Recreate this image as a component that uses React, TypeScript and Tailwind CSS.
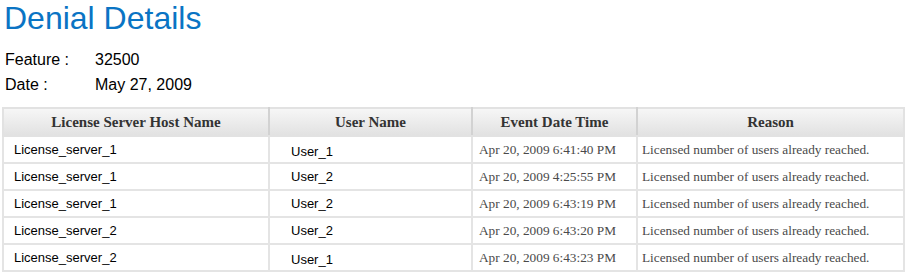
import React from "react"

const rows = [
  { host: "License_server_1", user: "User_1", time: "Apr 20, 2009 6:41:40 PM", low: true },
  { host: "License_server_1", user: "User_2", time: "Apr 20, 2009 4:25:55 PM", low: false },
  { host: "License_server_1", user: "User_2", time: "Apr 20, 2009 6:43:19 PM", low: false },
  { host: "License_server_2", user: "User_2", time: "Apr 20, 2009 6:43:20 PM", low: false },
  { host: "License_server_2", user: "User_1", time: "Apr 20, 2009 6:43:23 PM", low: true },
]

export default function App() {
  return (
    <div className="w-[913px] h-[280px] bg-white overflow-hidden font-['Liberation_Sans',Arial,sans-serif]">
      {/* Title */}
      <h1 className="pl-[4px] text-[32px] leading-[37px] text-[#0a74c4]">Denial Details</h1>

      {/* Summary */}
      <div className="mt-[10px] pl-[5px] text-[16px] leading-[25px] text-black">
        <div className="flex">
          <span className="w-[90px]">Feature :</span>
          <span>32500</span>
        </div>
        <div className="flex">
          <span className="w-[90px]">Date :</span>
          <span>May 27, 2009</span>
        </div>
      </div>

      {/* Denials table */}
      <table className="mt-[10px] ml-[2px] w-[901px] border-collapse border-2 border-[#e2e2e2] table-fixed">
        <colgroup>
          <col className="w-[266px]" />
          <col className="w-[203px]" />
          <col className="w-[165px]" />
          <col className="w-[267px]" />
        </colgroup>
        <thead>
          <tr className="h-[28px] bg-linear-to-b from-[#f7f7f7] to-[#e1e1e1] font-['Liberation_Serif','Times_New_Roman',serif] text-[15px] font-bold text-[#333]">
            <th className="border-2 border-[#e2e2e2] border-r-[#d2d2d2] p-0">License Server Host Name</th>
            <th className="border-2 border-[#e2e2e2] border-r-[#d2d2d2] p-0">User Name</th>
            <th className="border-2 border-[#e2e2e2] border-r-[#d2d2d2] p-0">Event Date Time</th>
            <th className="border-2 border-[#e2e2e2] p-0">Reason</th>
          </tr>
        </thead>
        <tbody>
          {rows.map((r, i) => (
            <tr key={i} className="h-[27px]">
              <td className="border-2 border-[#e4e4e4] pl-[10px] py-0 text-[13px] text-black">{r.host}</td>
              <td className={`border-2 border-[#e4e4e4] pl-[21px] py-0 text-[13px] text-black ${r.low ? "pt-[5px]" : ""}`}>
                {r.user}
              </td>
              <td className="border-2 border-[#e4e4e4] pl-[6px] py-0 font-['Liberation_Serif','Times_New_Roman',serif] text-[13.3px] text-[#4a4a4a]">
                {r.time}
              </td>
              <td className="border-2 border-[#e4e4e4] pl-[4px] py-0 font-['Liberation_Serif','Times_New_Roman',serif] text-[13.3px] text-[#4a4a4a]">
                Licensed number of users already reached.
              </td>
            </tr>
          ))}
        </tbody>
      </table>
    </div>
  )
}
